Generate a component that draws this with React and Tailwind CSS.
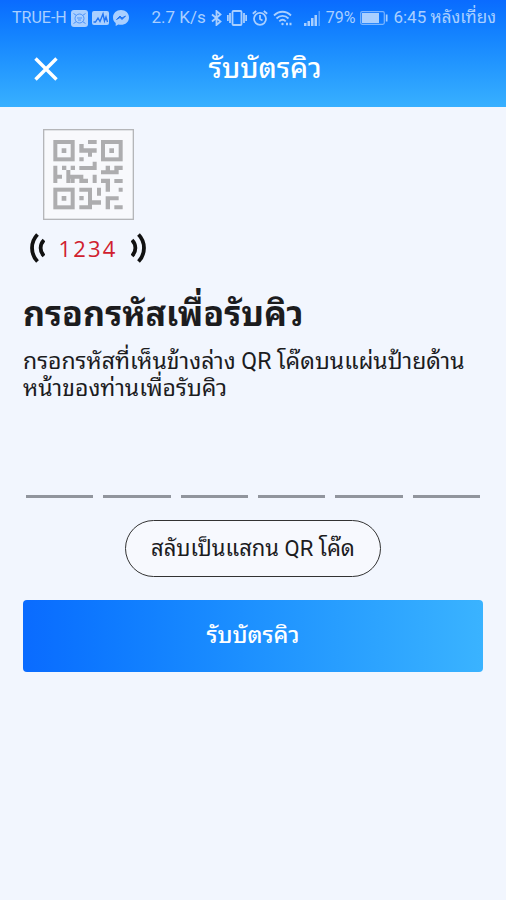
import { useRef, useState } from "react";

const CODE_LENGTH = 6;

function StatusBar() {
  return (
    <div className="flex h-9 items-center justify-between pr-2.5 pl-3 text-base text-[#a9cfff]">
      <div className="flex items-center gap-1">
        <span className="whitespace-nowrap">TRUE-H</span>
        <svg width="17" height="17" viewBox="0 0 17 17" aria-hidden="true">
          <rect width="17" height="17" rx="3" fill="currentColor" />
          <circle cx="8.5" cy="8.5" r="4.5" fill="none" stroke="#4b93fb" strokeWidth="1" />
          <path d="M2.5 3.5l3 2M14.5 3.5l-3 2M2.5 13.5l3-2M14.5 13.5l-3-2M6 8h5M7 10h3" stroke="#4b93fb" />
        </svg>
        <svg width="17" height="14" viewBox="0 0 17 14" aria-hidden="true">
          <rect width="17" height="14" rx="2" fill="currentColor" />
          <path d="M1.5 11h2l2.500-4 2 3.500L11 3l1.500 7L14 6l1.500 5" fill="none" stroke="#1f75f5" strokeWidth="1.4" />
        </svg>
        <svg width="16" height="16" viewBox="0 0 16 16" aria-hidden="true">
          <path d="M8 0C3.500 0 0 3.200 0 7.400c0 2.300 1 4.200 2.700 5.600V16l2.700-1.500c.8.200 1.700.3 2.600.3 4.500 0 8-3.200 8-7.400S12.500 0 8 0z" fill="currentColor" />
          <path d="M3.500 9.500l3.500-3.500 2 2 3.500-2-3.500 3.500-2-2z" fill="#1f75f5" stroke="#1f75f5" />
        </svg>
      </div>
      <div className="flex items-center gap-[5px]">
        <span className="text-[17px] whitespace-nowrap">2.7 K/s</span>
        <svg width="11" height="16" viewBox="0 0 11 16" fill="none" stroke="currentColor" strokeWidth="1.8" aria-hidden="true">
          <path d="M1 4.500l8.500 7L5.500 15V1l4 3.500L1 11.500" />
        </svg>
        <svg width="20" height="16" viewBox="0 0 20 16" fill="none" stroke="currentColor" strokeWidth="1.800" aria-hidden="true">
          <rect x="5.500" y="1" width="9" height="14" rx="1" />
          <path d="M3 3v10M.8 5v6M17 3v10M19.200 5v6" />
        </svg>
        <svg width="16" height="16" viewBox="0 0 16 16" fill="none" stroke="currentColor" strokeWidth="1.800" aria-hidden="true">
          <circle cx="8" cy="8.800" r="6" />
          <path d="M8 5v4l2.500 1.500M.8 3.800L4.200 1M15.200 3.800L11.800 1" />
        </svg>
        <svg width="20" height="16" viewBox="0 0 20 16" fill="none" stroke="currentColor" strokeWidth="1.800" aria-hidden="true">
          <path d="M1 5.500c5-5 12-5 17 0M3.500 8.500c3.500-3.500 8.500-3.500 12 0M6.300 11.300c2-2 4.400-2 6.400 0" />
          <circle cx="9.500" cy="14" r="1.200" fill="currentColor" stroke="none" />
          <path d="M13 14h2M16.500 14h2" strokeWidth="2.500" />
        </svg>
        <svg className="ml-1.5" width="17" height="15" viewBox="0 0 17 15" fill="currentColor" aria-hidden="true">
          <path d="M0 12h2.500v3H0zM3.500 10H6v5H3.500zM7 7h2.500v8H7zM10.500 4H13v11h-2.500z" />
          <path d="M14.500 0h1.500v15h-1.500z" opacity=".5" />
        </svg>
        <span>79%</span>
        <svg width="28" height="14" viewBox="0 0 28 14" aria-hidden="true">
          <rect x=".7" y=".7" width="23.600" height="12.600" rx="1.500" fill="none" stroke="currentColor" strokeWidth="1.200" opacity=".7" />
          <path d="M2 2h17v10H2zM25.800 3.500h1.700v7h-1.700z" fill="currentColor" />
        </svg>
        <span className="text-[17px] whitespace-nowrap">6:45 หลังเที่ยง</span>
      </div>
    </div>
  );
}

function QrIcon() {
  return (
    <svg width="91" height="91" viewBox="0 0 273 273" aria-hidden="true">
      <rect x="2" y="2" width="269" height="269" fill="#f8f9fc" stroke="#b5b6b9" strokeWidth="4" />
      <g transform="translate(-69 -43)" fill="#adadaf">
        <g fill="none" stroke="#adadaf" strokeWidth="12">
          <rect x="106" y="82" width="52" height="52" />
          <rect x="249" y="82" width="53" height="52" />
          <rect x="106" y="225" width="52" height="53" />
        </g>
        <path d="M125 101h14v14h-14zM268 101h14v14h-14zM125 244h14v14h-14z" />
        <path d="M204 76h26v12h-26zM178 88h13v13h39v13h-14v12h-12v-12h-26zM178 128h13v12h-13z" />
        <path d="M218 141h12v25h-52v-12h40zM218 180h12v25h-12z" />
        <path d="M100 153h12v27h14v12h-14v13h-12zM126 153h13v13h-13zM139 166h12v14h39v12h14v13h-26v-13h-14v13h-12v-13h-1v13h-12zM152 153h13v13h-13z" />
        <path d="M257 153h13v14h13v-14h25v13h-12v13h-53v-12h14z" />
        <path d="M243 192h27v39h-13v-26h-14zM283 193h25v12h-25zM296 219h12v12h-12z" />
        <path d="M178 219h38v38h27v13h-27v14h-38v-12h26v-41h-26zM178 244h13v13h-13zM231 219h12v24h-12z" />
        <path d="M257 245h39v12h-26v27h-13zM283 272h25v12h-25z" />
      </g>
    </svg>
  );
}

function Waves({ className }) {
  return (
    <svg className={className} width="15" height="30" viewBox="0 0 15 30" fill="none" stroke="#111" aria-hidden="true">
      <path d="M7.500 1.500C.2 9 .2 21 7.500 28.500" strokeWidth="3.800" />
      <path d="M14 7c-4.500 4.500-4.500 11.500 0 16" strokeWidth="3.800" />
    </svg>
  );
}

export default function App() {
  const [code, setCode] = useState(Array(CODE_LENGTH).fill(""));
  const inputs = useRef([]);

  const handleChange = (index, value) => {
    setCode((prev) => prev.map((digit, i) => (i === index ? value : digit)));
    if (value && index < CODE_LENGTH - 1) inputs.current[index + 1].focus();
  };

  return (
    <div className="min-h-screen bg-[#f2f6fe] font-['Roboto','Noto_Sans_Thai_Looped','Loma','Waree','Noto_Sans',sans-serif] text-[#1c1c1e]">
      <header className="bg-linear-to-b from-[#0a6bff] to-[#38b0ff]">
        <StatusBar />
        <div className="grid h-[71px] grid-cols-[64px_1fr_40px] items-center px-6 pb-1.5">
          <button type="button" aria-label="ปิด" className="flex size-11 items-center justify-center text-white">
            <svg width="24" height="24" viewBox="0 0 24 24" fill="none" stroke="currentColor" strokeWidth="3.4">
              <path d="M1.500 1.500l21 21M22.500 1.500l-21 21" />
            </svg>
          </button>
          <h1 className="text-center text-[28px] leading-10 font-medium text-white">รับบัตรคิว</h1>
        </div>
      </header>

      <main className="px-[23px] pt-[22px]">
        <div className="flex w-[130px] flex-col items-center gap-3">
          <QrIcon />
          <div className="flex w-[116px] items-center justify-between">
            <Waves />
            <span className="font-['Open_Sans',sans-serif] text-[22px] leading-8 tracking-widest text-[#d0202e]">1234</span>
            <Waves className="-scale-x-100" />
          </div>
        </div>

        <h2 className="mt-[26px] text-[34px] leading-12 font-bold">กรอกรหัสเพื่อรับคิว</h2>
        <p className="mt-2.5 text-[23px] leading-[27px]">
          กรอกรหัสที่เห็นข้างล่าง QR โค๊ดบนแผ่นป้ายด้าน
          <wbr />
          หน้าของท่านเพื่อรับคิว
        </p>

        <form onSubmit={(e) => e.preventDefault()}>
          <div className="mt-12 grid grid-cols-6 gap-[10px] px-[3px]">
            {code.map((digit, index) => (
              <input
                key={index}
                ref={(el) => {
                  inputs.current[index] = el;
                }}
                type="text"
                inputMode="numeric"
                maxLength={1}
                aria-label={`รหัสหลักที่ ${index + 1}`}
                className="h-12 w-full min-w-0 border-b-3 border-[#91959d] bg-transparent text-center text-2xl outline-none"
                value={digit}
                onChange={(e) => handleChange(index, e.target.value)}
              />
            ))}
          </div>
          <button
            type="button"
            className="mx-auto mt-[22px] flex h-[57px] items-center rounded-full border border-[#333] bg-[#f7f9fe] px-[25px] text-[22px]"
          >
            สลับเป็นแสกน QR โค๊ด
          </button>
          <button
            type="submit"
            className="mt-[23px] h-[72px] w-full rounded bg-linear-to-r from-[#0a6bff] to-[#3ab3ff] text-[23px] font-medium text-white"
          >
            รับบัตรคิว
          </button>
        </form>
      </main>
    </div>
  );
}
